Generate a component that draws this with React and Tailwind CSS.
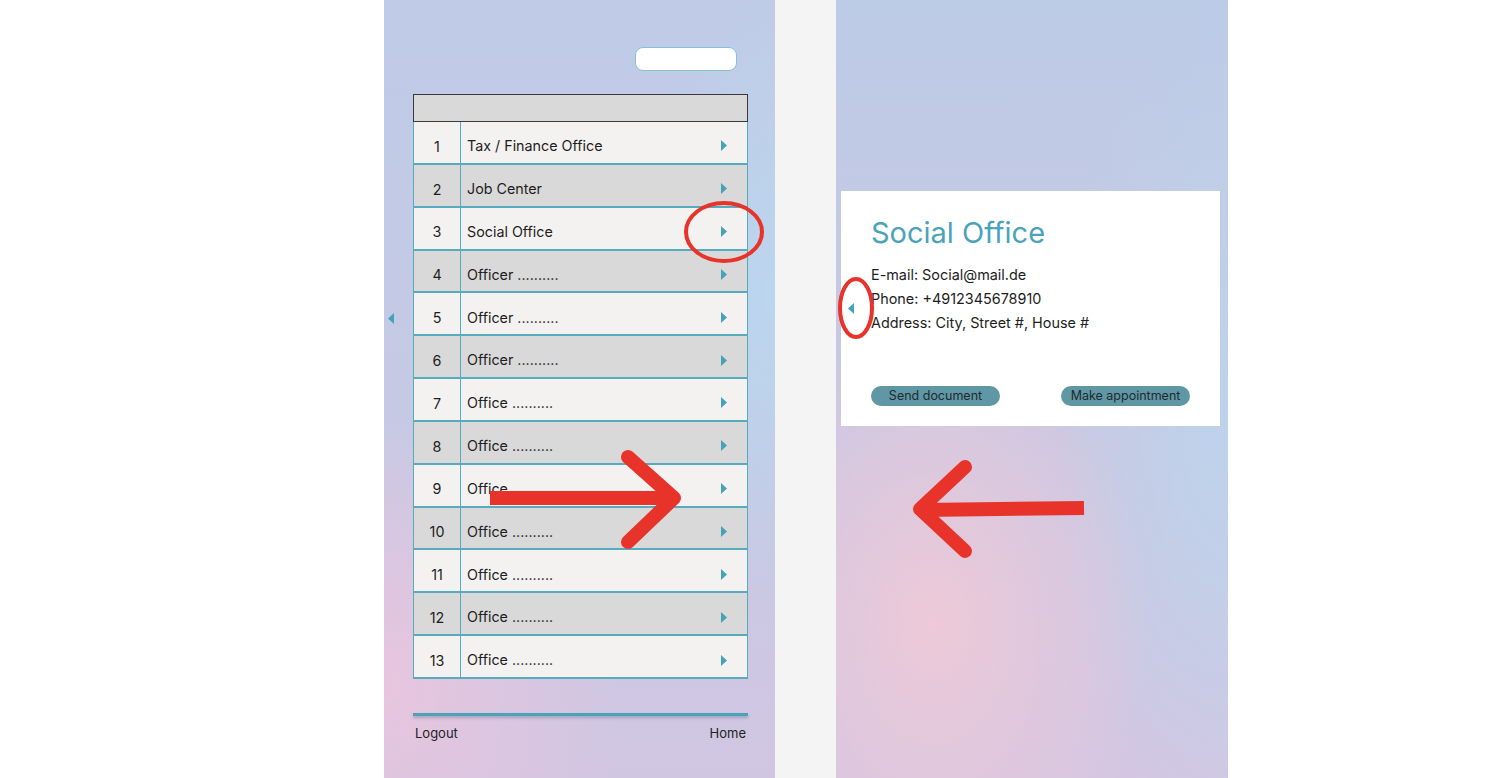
const rows = [
  'Tax / Finance Office',
  'Job Center',
  'Social Office',
  'Officer ..........',
  'Officer ..........',
  'Officer ..........',
  'Office ..........',
  'Office ..........',
  'Office ..........',
  'Office ..........',
  'Office ..........',
  'Office ..........',
  'Office ..........',
]

function CaretRight() {
  return (
    <svg width="6" height="11" viewBox="0 0 6 11" className="shrink-0">
      <path d="M0 0 L6 5.5 L0 11 Z" fill="#45a2b8" />
    </svg>
  )
}

function CaretLeft() {
  return (
    <svg width="6" height="11" viewBox="0 0 6 11" className="shrink-0">
      <path d="M6 0 L0 5.5 L6 11 Z" fill="#45a2b8" />
    </svg>
  )
}

function OfficeList() {
  return (
    <div className="w-[391px] h-full flex flex-col bg-[radial-gradient(ellipse_60%_35%_at_0%_88%,#e8c5de_0%,transparent_100%),radial-gradient(ellipse_35%_40%_at_100%_38%,#bad6ee_0%,transparent_100%),linear-gradient(180deg,#bfcbe7_0%,#c6c9e4_55%,#d1c6e2_100%)]">
      <div className="h-[47px]" />
      <div className="flex justify-end pr-[38px]">
        <div className="w-[102px] h-[24px] rounded-lg bg-white border border-[#86c3d2]" />
      </div>
      <div className="h-[23px]" />
      <div className="flex">
        <div className="w-[29px] pl-[4px] pt-[219px]">
          <CaretLeft />
        </div>
        <div className="w-[335px]">
          <div className="h-[28px] bg-[#d9d9d9] border-[1.5px] border-[#3a3a3a]" />
          {rows.map((name, i) => (
            <div
              key={i}
              className={`h-[42.85px] flex border-x-[1.5px] border-b-[2px] border-[#56acbe] text-[14.3px] text-[#1e1e1e] ${i % 2 === 0 ? 'bg-[#f4f2f1]' : 'bg-[#d9d9d9]'}`}
            >
              <div className="w-[47px] border-r-[1.5px] border-[#56acbe] flex items-center justify-center pt-[8px]">{i + 1}</div>
              <div className="flex-1 flex items-center pl-[6px] pr-[20px] pt-[7px]">
                <span className="flex-1">{name}</span>
                <CaretRight />
              </div>
            </div>
          ))}
        </div>
      </div>
      <div className="h-[34px]" />
      <div className="mx-[29px] w-[335px] h-[3px] bg-[#4ca3b8] shadow-[0_2px_3px_rgba(60,90,120,0.35)]" />
      <div className="mx-[29px] w-[335px] flex justify-between text-[13px] text-[#222] pt-[8px] px-[2px]">
        <span>Logout</span>
        <span>Home</span>
      </div>
    </div>
  )
}

function OfficeDetail() {
  return (
    <div className="w-[392px] h-full pt-[191px] pl-[5px] bg-[radial-gradient(ellipse_55%_40%_at_25%_80%,#edc9d8_0%,transparent_100%),radial-gradient(ellipse_45%_55%_at_100%_55%,#bdd3eb_0%,transparent_100%),linear-gradient(180deg,#bccbe6_0%,#c9c8e3_50%,#d4c6e2_100%)]">
      <div className="w-[379px] h-[235px] bg-white flex">
        <div className="w-[30px] flex items-center pl-[7px]">
          <CaretLeft />
        </div>
        <div className="flex-1 pt-[22px] pr-[30px] text-[#1e1e1e]">
          <h2 className="text-[29px] leading-[40px] text-[#4aa3b8] font-normal">Social Office</h2>
          <div className="mt-[10px] text-[14.4px] leading-[24px]">
            <p>E-mail: Social@mail.de</p>
            <p>Phone: +4912345678910</p>
            <p>Address: City, Street #, House #</p>
          </div>
          <div className="mt-[51px] flex justify-between">
            <button className="w-[129px] h-[20px] rounded-full bg-[#5f97a4] text-[12.5px] leading-[20px] text-[#1d2b30]">Send document</button>
            <button className="w-[129px] h-[20px] rounded-full bg-[#5f97a4] text-[12.5px] leading-[20px] text-[#1d2b30]">Make appointment</button>
          </div>
        </div>
      </div>
    </div>
  )
}

export default function App() {
  return (
    <div className="relative w-[1486px] h-[778px] bg-white flex overflow-hidden font-['Inter','Liberation_Sans',sans-serif]">
      <div className="w-[384px]" />
      <OfficeList />
      <div className="w-[61px] h-full bg-[#f4f4f4]" />
      <OfficeDetail />

      <svg className="absolute inset-0 pointer-events-none" width="1486" height="778" viewBox="0 0 1486 778">
        <g fill="none" stroke="#e8332a" strokeLinecap="round" strokeLinejoin="round">
          <ellipse cx="724" cy="232" rx="38" ry="29" strokeWidth="4" />
          <ellipse cx="856" cy="308" rx="16" ry="29" strokeWidth="4" />
          <path d="M490 498 L676 498" strokeWidth="14" strokeLinecap="butt" />
          <path d="M628 457 L674 498 L628 542" strokeWidth="14" />
          <path d="M1084 508 L922 510" strokeWidth="14" strokeLinecap="butt" />
          <path d="M965 467 L920 509 L965 551" strokeWidth="14" />
        </g>
      </svg>
    </div>
  )
}
